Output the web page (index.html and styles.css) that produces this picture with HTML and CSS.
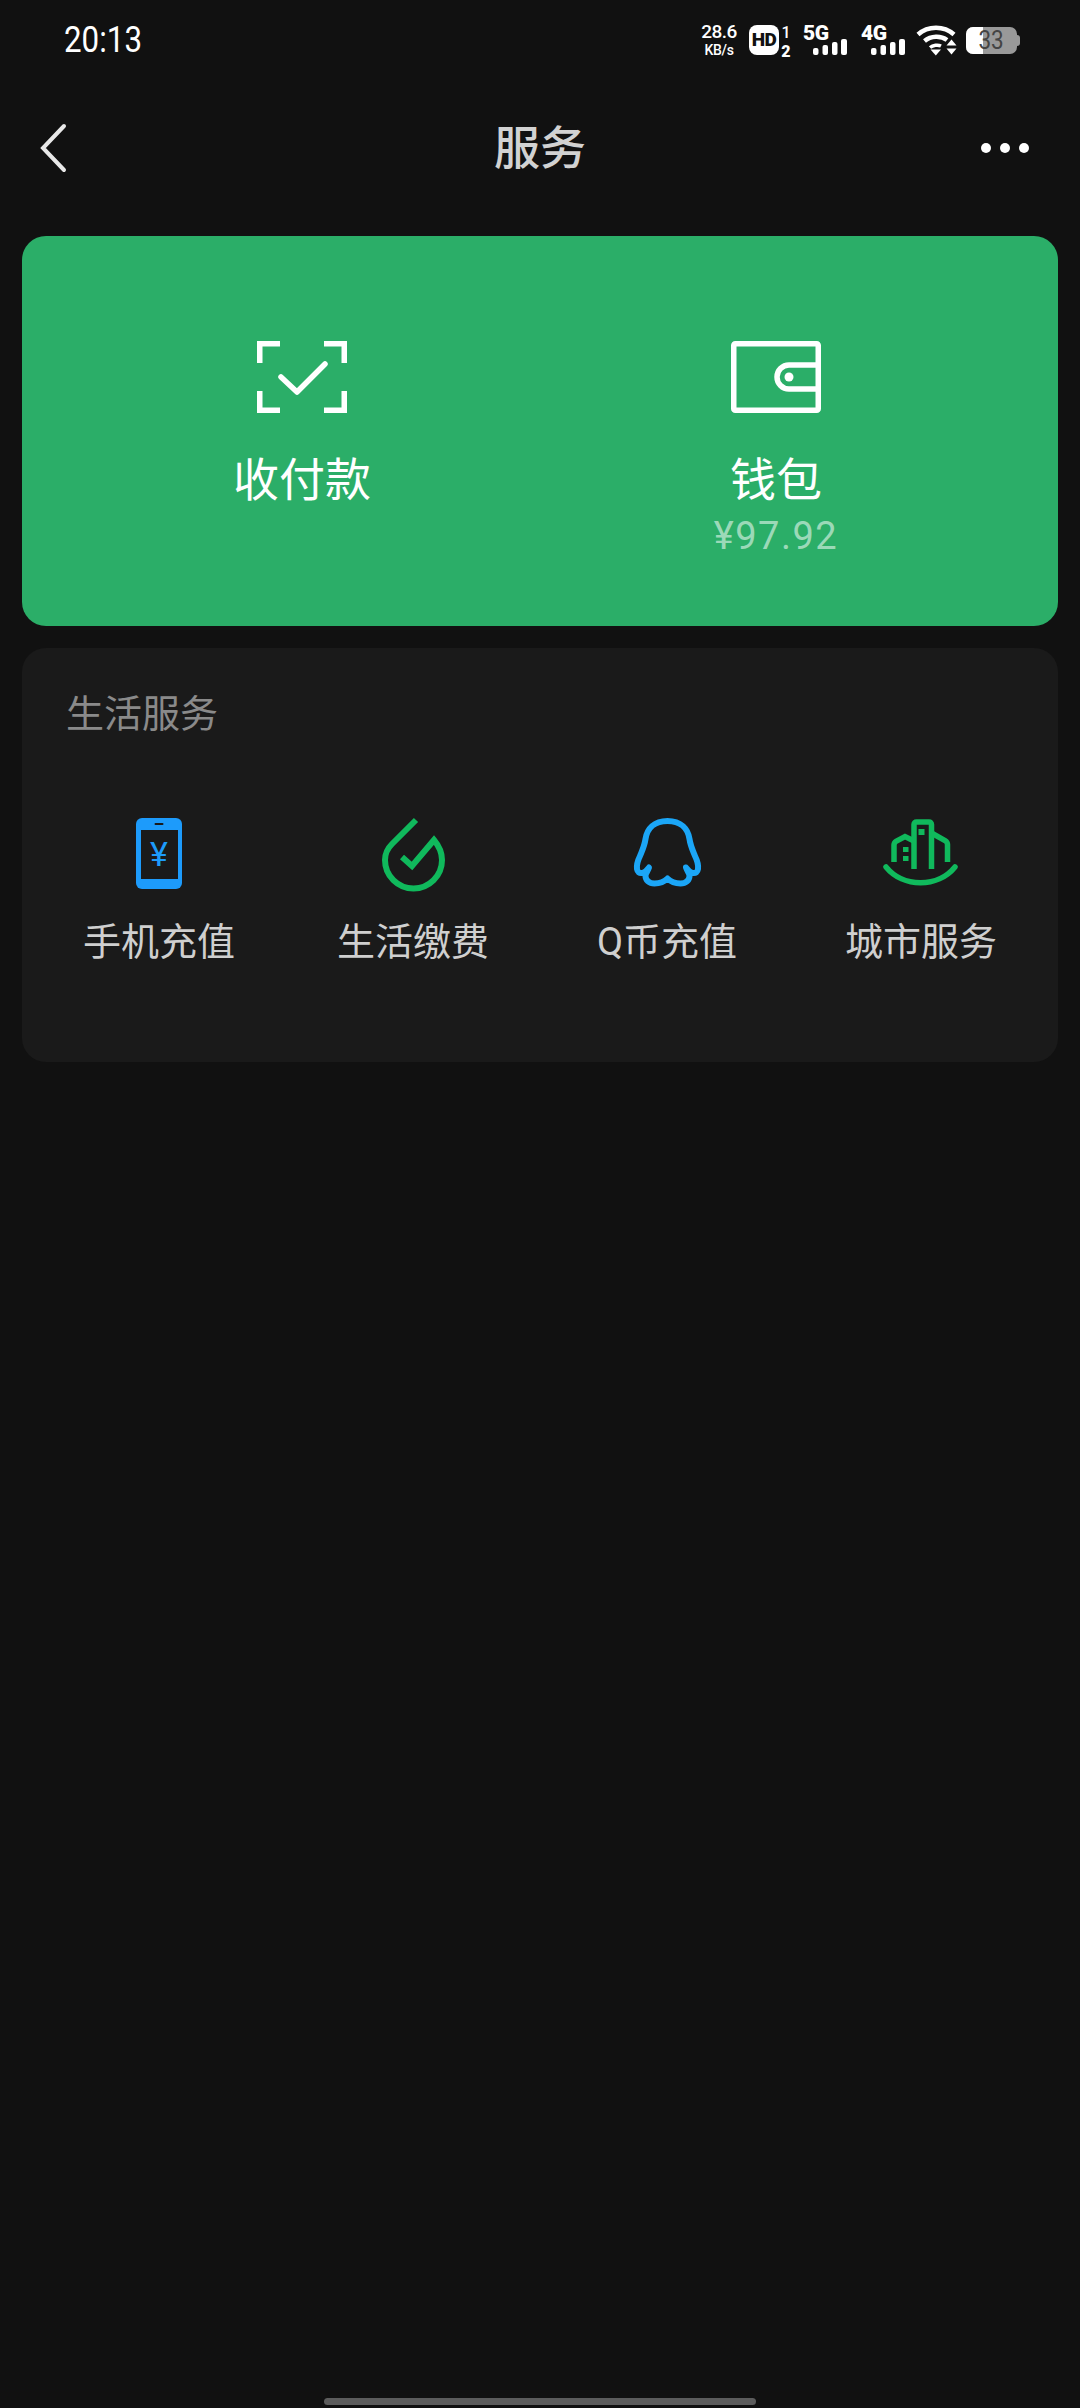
FILE: index.html
```html
<!DOCTYPE html>
<html lang="zh-CN">
<head>
  <meta charset="UTF-8" />
  <meta name="viewport" content="width=device-width, initial-scale=1.0"/>
  <title>服务</title>
  <link rel="stylesheet" href="styles.css">
</head>
<body>

  <div class="status-bar">
    <span class="time">20:13</span>
    <div class="status-icons">
      <div class="net-speed">
        <span class="net-num">28.6</span>
        <span class="net-unit">KB/s</span>
      </div>
      <div class="hd">
        <span class="hd-badge">HD</span>
        <div class="hd-nums"><span class="hd-one">1</span><span>2</span></div>
      </div>
      <div class="sim">
        <span class="sim-label">5G</span>
        <svg class="bars" width="34" height="16" viewBox="0 0 34 16" fill="#fff">
          <rect x="0" y="9" width="5.500" height="7" rx="2"/>
          <rect x="9.500" y="6" width="5.500" height="10" rx="2"/>
          <rect x="19" y="3" width="5.500" height="13" rx="2"/>
          <rect x="28" y="0" width="6" height="16" rx="2"/>
        </svg>
      </div>
      <div class="sim sim-second">
        <span class="sim-label">4G</span>
        <svg class="bars" width="34" height="16" viewBox="0 0 34 16" fill="#fff">
          <rect x="0" y="9" width="5.500" height="7" rx="2"/>
          <rect x="9.500" y="6" width="5.500" height="10" rx="2"/>
          <rect x="19" y="3" width="5.500" height="13" rx="2"/>
          <rect x="28" y="0" width="6" height="16" rx="2"/>
        </svg>
      </div>
      <svg class="wifi" width="41" height="31" viewBox="0 0 41 31" fill="none">
        <path d="M2 9.500C12 0.500 28 0.500 38 9.500" stroke="#fff" stroke-width="4.500"/>
        <path d="M8.500 16C15 10.500 25 10.500 31 15" stroke="#fff" stroke-width="4.500"/>
        <path d="M14 22.500C17 20 22 19.500 25 21" stroke="#fff" stroke-width="3.500"/>
        <path d="M14.500 24.500H25L19.800 30.500Z" fill="#fff"/>
        <path d="M30.500 20.500H40.500L35.500 14.500Z" fill="#fff"/>
        <path d="M30.500 23.500H40.500L35.500 29.500Z" fill="#fff"/>
      </svg>
      <div class="battery">
        <div class="battery-body">
          <span class="battery-fill"></span>
          <span class="battery-num">33</span>
        </div>
        <span class="battery-tip"></span>
      </div>
    </div>
  </div>

  <div class="nav">
    <svg class="back" width="30" height="50" viewBox="0 0 30 50" fill="none">
      <path d="M24 3L3 25L24 47" stroke="#e8e8e8" stroke-width="4" stroke-linecap="round"/>
    </svg>
    <h1>服务</h1>
    <div class="dots"><span></span><span></span><span></span></div>
  </div>

  <div class="content">
    <div class="pay-card">
      <div class="pay-item">
        <svg width="90" height="72" viewBox="0 0 90 72" fill="none" stroke="#fff" stroke-width="5.500">
          <path d="M23 2.750H2.750V22"/>
          <path d="M67 2.750H87.250V22"/>
          <path d="M23 69.250H2.750V50"/>
          <path d="M67 69.250H87.250V50"/>
          <path d="M24 36L40 51L68 23" stroke-linecap="round" stroke-linejoin="round"/>
        </svg>
        <span class="pay-label">收付款</span>
      </div>
      <div class="pay-item">
        <svg width="90" height="72" viewBox="0 0 90 72" fill="none" stroke="#fff" stroke-width="5.500">
          <rect x="2.750" y="2.750" width="84.500" height="66.500" rx="1.500"/>
          <path d="M86 24H58A12 12 0 0 0 58 48H86"/>
          <circle cx="58" cy="36" r="4.500" fill="#fff" stroke="none"/>
        </svg>
        <span class="pay-label">钱包</span>
        <span class="pay-amount">¥97.92</span>
      </div>
    </div>

    <div class="life-card">
      <div class="life-title">生活服务</div>
      <div class="life-grid">
        <div class="life-item">
          <svg width="80" height="80" viewBox="0 0 80 80">
            <rect x="17" y="5" width="46" height="71" rx="6" fill="#1d9bfb"/>
            <rect x="22" y="17" width="37" height="49" fill="#1a1a1a"/>
            <rect x="35.500" y="10" width="9" height="2" rx="1" fill="#1a1a1a"/>
            <text x="40" y="53" text-anchor="middle" class="phone-yen">¥</text>
          </svg>
          <span class="life-label">手机充值</span>
        </div>
        <div class="life-item">
          <svg width="80" height="80" viewBox="0 0 80 80" fill="none">
            <path d="M43 7L19 31C14 36 12 41 12 47A28.500 28.500 0 0 0 69 47C69 40 66 33 61 27L39 53L29 44" stroke="#10b95c" stroke-width="6"/>
          </svg>
          <span class="life-label">生活缴费</span>
        </div>
        <div class="life-item">
          <svg width="80" height="80" viewBox="0 0 80 80" fill="none">
            <path d="M40.500 8C27 8 20 16 18.500 26C17.500 33 15 38 13 43C10.500 48 9.500 52 10 56C10.500 59 12.500 60.500 15 60C18 59.500 20 57 22 54.500C21 58 18.500 60 18.500 63C18.500 67 22 70.500 27.500 70.500C33 70.500 37 69 40.500 65.500C44 69 48 70.500 53.500 70.500C59 70.500 62.500 67 62.500 63C62.500 60 60 58 59 54.500C61 57 63 59.500 66 60C68.500 60.500 70.500 59 71 56C71.500 52 70.500 48 68 43C66 38 63.500 33 62.500 26C61 16 54 8 40.500 8Z" stroke="#1ba6f7" stroke-width="6" stroke-linejoin="round"/>
          </svg>
          <span class="life-label">Q币充值</span>
        </div>
        <div class="life-item">
          <svg width="80" height="80" viewBox="0 0 80 80" fill="none" stroke="#10b95c" stroke-width="5.500">
            <path d="M5 54C22 75 57 75 74 54" stroke-linecap="round"/>
            <path d="M33 56V11.500C33 10 34 9 35.500 9H48C49.500 9 50.500 10 50.500 11.500V56"/>
            <path d="M13 49V32C13 30.500 14 29 15.500 28L24 23.500L33 28"/>
            <path d="M50.500 20L64 27.500C65.500 28.500 66.500 30 66.500 31.500V49"/>
            <rect x="37.500" y="16" width="6" height="6" fill="#10b95c" stroke="none"/>
            <rect x="22" y="34" width="5.500" height="5" fill="#10b95c" stroke="none"/>
            <rect x="22" y="43" width="5.500" height="5" fill="#10b95c" stroke="none"/>
          </svg>
          <span class="life-label">城市服务</span>
        </div>
      </div>
    </div>
  </div>

  <div class="home-bar"></div>

</body>
</html>
```

FILE: styles.css
```css
* {
  box-sizing: border-box;
}

body {
  font-family: Roboto, "Noto Sans CJK SC", sans-serif;
  background-color: #111;
  color: #fff;
  margin: 0;
  width: 1080px;
  height: 2408px;
  display: flex;
  flex-direction: column;
  overflow: hidden;
}

.status-bar {
  height: 80px;
  flex-shrink: 0;
  display: flex;
  align-items: center;
  justify-content: space-between;
  padding: 0 60px 0 64px;
}

.time {
  font-size: 36px;
  line-height: 40px;
  display: inline-block;
  transform: scaleX(0.87);
  transform-origin: left center;
}

.status-icons {
  display: flex;
  align-items: center;
}

.net-speed {
  width: 34px;
  display: flex;
  flex-direction: column;
  align-items: center;
  font-weight: 500;
}

.net-num {
  font-size: 19px;
  line-height: 20px;
  letter-spacing: -0.5px;
}

.net-unit {
  font-size: 14px;
  line-height: 17px;
  letter-spacing: -0.3px;
}

.hd {
  display: flex;
  align-items: center;
  margin-left: 13px;
}

.hd-badge {
  width: 30px;
  height: 30px;
  border-radius: 8px;
  background: #fff;
  color: #111;
  font-size: 19px;
  font-weight: 900;
  line-height: 30px;
  text-align: center;
  letter-spacing: -0.5px;
}

.hd-nums {
  width: 12px;
  margin: 3px 0 0 1px;
  display: flex;
  flex-direction: column;
  align-items: center;
  font-size: 16px;
  font-weight: 900;
  line-height: 19px;
}

.hd-one {
  font-weight: 500;
}

.sim {
  width: 44px;
  height: 30px;
  margin-left: 11px;
  display: flex;
  flex-direction: column;
}

.sim-second {
  margin-left: 14px;
}

.sim-label {
  font-size: 21px;
  font-weight: 900;
  line-height: 16px;
  letter-spacing: -0.3px;
}

.bars {
  align-self: flex-end;
  margin-top: -2px;
}

.wifi {
  margin-left: 11px;
}

.battery {
  display: flex;
  align-items: center;
  margin-left: 9px;
}

.battery-body {
  width: 51px;
  height: 27px;
  border-radius: 7px;
  background: #999;
  overflow: hidden;
  display: flex;
  position: relative;
  justify-content: center;
}

.battery-fill {
  position: absolute;
  left: 0;
  top: 0;
  bottom: 0;
  width: 17px;
  background: #fff;
}

.battery-num {
  position: relative;
  color: #444;
  font-size: 25px;
  line-height: 27px;
  transform: scaleX(0.9);
}

.battery-tip {
  width: 3px;
  height: 11px;
  background: #999;
  border-radius: 0 3px 3px 0;
}

.nav {
  height: 136px;
  flex-shrink: 0;
  display: grid;
  grid-template-columns: 1fr auto 1fr;
  align-items: center;
  padding: 0 51px;
}

.back {
  display: block;
  margin-left: -11px;
}

h1 {
  margin: 0;
  font-size: 46px;
  font-weight: 500;
  color: #d2d2d2;
  line-height: 60px;
}

.dots {
  display: flex;
  justify-content: flex-end;
  gap: 9px;
}

.dots span {
  width: 10px;
  height: 10px;
  border-radius: 50%;
  background: #fff;
}

.content {
  padding: 20px 22px 0;
  display: flex;
  flex-direction: column;
  gap: 22px;
}

.pay-card {
  height: 390px;
  background: #2bae68;
  border-radius: 24px;
  padding: 105px 45px 0 43px;
  display: grid;
  grid-template-columns: 1fr 1fr;
}

.pay-item {
  display: flex;
  flex-direction: column;
  align-items: center;
}

.pay-label {
  margin-top: 37px;
  font-size: 46px;
  line-height: 60px;
}

.pay-amount {
  font-size: 38px;
  line-height: 44px;
  letter-spacing: 1.5px;
  color: rgba(255, 255, 255, 0.55);
  margin-top: 4px;
}

.life-card {
  height: 414px;
  background: #1a1a1a;
  border-radius: 24px;
  padding: 41px 10px 0;
}

.life-title {
  padding-left: 34px;
  font-size: 38px;
  line-height: 50px;
  color: #8a8a8a;
}

.life-grid {
  margin-top: 74px;
  display: grid;
  grid-template-columns: repeat(4, 1fr);
}

.life-item {
  display: flex;
  flex-direction: column;
  align-items: center;
}

.phone-yen {
  font-family: Roboto, sans-serif;
  font-size: 34px;
  font-weight: 400;
  fill: #1d9bfb;
}

.life-label {
  margin-top: 24px;
  font-size: 38px;
  line-height: 50px;
  color: #cfcfcf;
}

.home-bar {
  margin-top: auto;
  margin-bottom: 3px;
  align-self: center;
  width: 432px;
  height: 7px;
  border-radius: 4px;
  background: #5c5c5c;
}
```
